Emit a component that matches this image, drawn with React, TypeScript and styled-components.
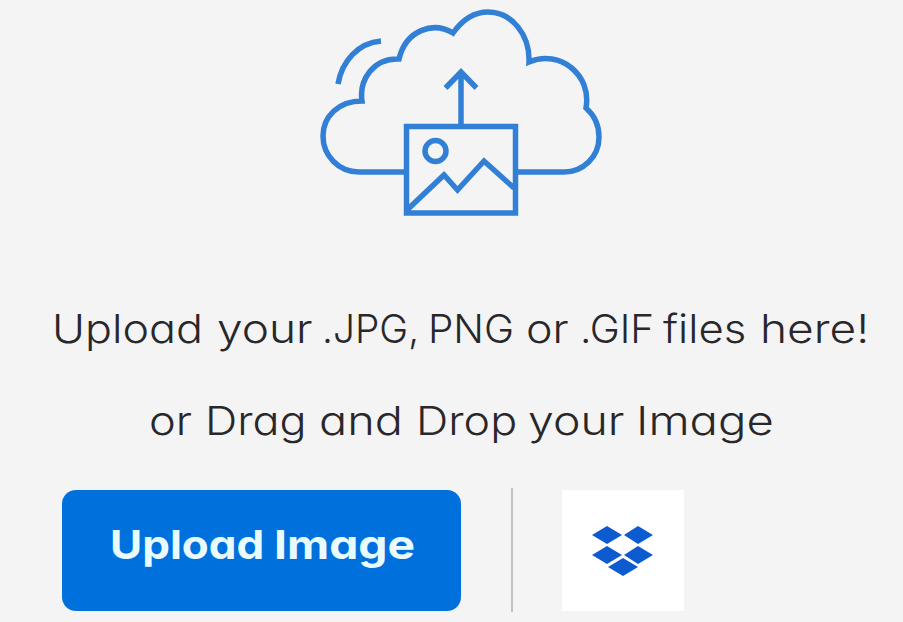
import React from "react";
import styled, { createGlobalStyle } from "styled-components";

const GlobalStyle = createGlobalStyle`
  * { box-sizing: border-box; }
  body { margin: 0; background: #f4f4f4; }
`;

const UploadPanel = styled.main`
  width: 903px;
  height: 622px;
  overflow: hidden;
  background: #f4f4f4;
  color: #28272a;
  font-family: "Inter", "Liberation Sans", sans-serif;
  font-feature-settings: "cv11" 1;
  display: flex;
  flex-direction: column;
`;

const CloudIcon = styled.svg`
  display: block;
  width: 290px;
  height: 220px;
  margin: 0 0 77px 316px;
  fill: none;
  stroke: #3180d6;
  stroke-width: 5.5;
`;

const TextLine = styled.p<{ $indent: number }>`
  margin: 0 0 28px;
  padding-left: ${({ $indent }) => $indent}px;
  height: 64px;
  line-height: 64px;
  font-size: 40px;
  font-weight: 350;
  display: flex;
  white-space: nowrap;
`;

const Word = styled.span<{ $width: number; $stretch: number }>`
  flex: 0 0 ${({ $width }) => $width}px;
  transform: scaleX(${({ $stretch }) => $stretch});
  transform-origin: left center;
`;

const Actions = styled.div`
  display: flex;
  margin: 9px 0 0 62px;
  height: 121px;
`;

const UploadButton = styled.button`
  width: 399px;
  height: 121px;
  border: 0;
  border-radius: 14px;
  background: #0071dc;
  color: #e8fbff;
  font: 700 40px/110px "Inter", "Liberation Sans", sans-serif;
  font-feature-settings: "cv11" 1;
  padding: 0 0 11px 48px;
  display: flex;
  text-align: left;
`;

const Divider = styled.div`
  width: 2px;
  height: 124px;
  margin: -2px 49px 0 50px;
  background: #c4c2c1;
`;

const DropboxButton = styled.button`
  width: 122px;
  height: 121px;
  border: 0;
  padding: 0;
  background: #fff;
  display: flex;
  align-items: center;
  justify-content: center;
`;

const DropboxIcon = styled.svg`
  width: 62px;
  height: 52px;
  fill: #0d5bd1;
`;

type WordSpec = [text: string, width: number, stretch: number];

const firstLine: WordSpec[] = [
  ["Upload", 165, 1.12], ["your", 105, 1.15], [".JPG,", 106, 0.97], ["PNG", 98, 1.01],
  ["or", 54, 1.12], [".GIF", 83, 1.01], ["files", 97, 1.09], ["here!", 110, 1.15],
];
const secondLine: WordSpec[] = [
  ["or", 56, 1.13], ["Drag", 114, 1.12], ["and", 97, 1.17],
  ["Drop", 112, 1.12], ["your", 108, 1.16], ["Image", 140, 1.18],
];
const buttonWords: WordSpec[] = [["Upload", 164, 1.1], ["Image", 144, 1.155]];

const Words = ({ items }: { items: WordSpec[] }) => (
  <>
    {items.map(([text, width, stretch], i) => (
      <Word key={i} $width={width} $stretch={stretch}>{text} </Word>
    ))}
  </>
);

export default function App() {
  return (
    <UploadPanel>
      <GlobalStyle />
      <CloudIcon viewBox="316 0 290 220" aria-hidden="true">
        <path d="M406 172H359C339 172 323 156 323 136C323 116 339 101 362 101C359 80 373 58 399 59C406 30 433 21 453 33C463 19 474 12 488 12C512 12 530 35 529 62C560 49 592 75 586 108C594 115 599 125 599 137C599 157 583 172 564 172H516" />
        <path d="M338 84C342 61 358 43 381 41" />
        <path d="M406.5 126.5H515.5V213H406.5ZM461 125V72M445.500 88L461 72L476.500 88M407 210L444 175L457.500 190L484 161L514 188" />
        <circle cx="435.500" cy="151" r="10.500" />
      </CloudIcon>
      <TextLine $indent={52}><Words items={firstLine} /></TextLine>
      <TextLine $indent={149}><Words items={secondLine} /></TextLine>
      <Actions>
        <UploadButton><Words items={buttonWords} /></UploadButton>
        <Divider />
        <DropboxButton aria-label="Dropbox">
          <DropboxIcon viewBox="592 525 62 52">
            <path d="M592 535L607 526L622 535L607 544ZM624 535L638 526L653 535L638 544ZM592 555L607 546L622 555L607 564ZM624 555L638 546L653 555L638 564ZM608 567L623 558L638 567L623 576Z" />
          </DropboxIcon>
        </DropboxButton>
      </Actions>
    </UploadPanel>
  );
}
